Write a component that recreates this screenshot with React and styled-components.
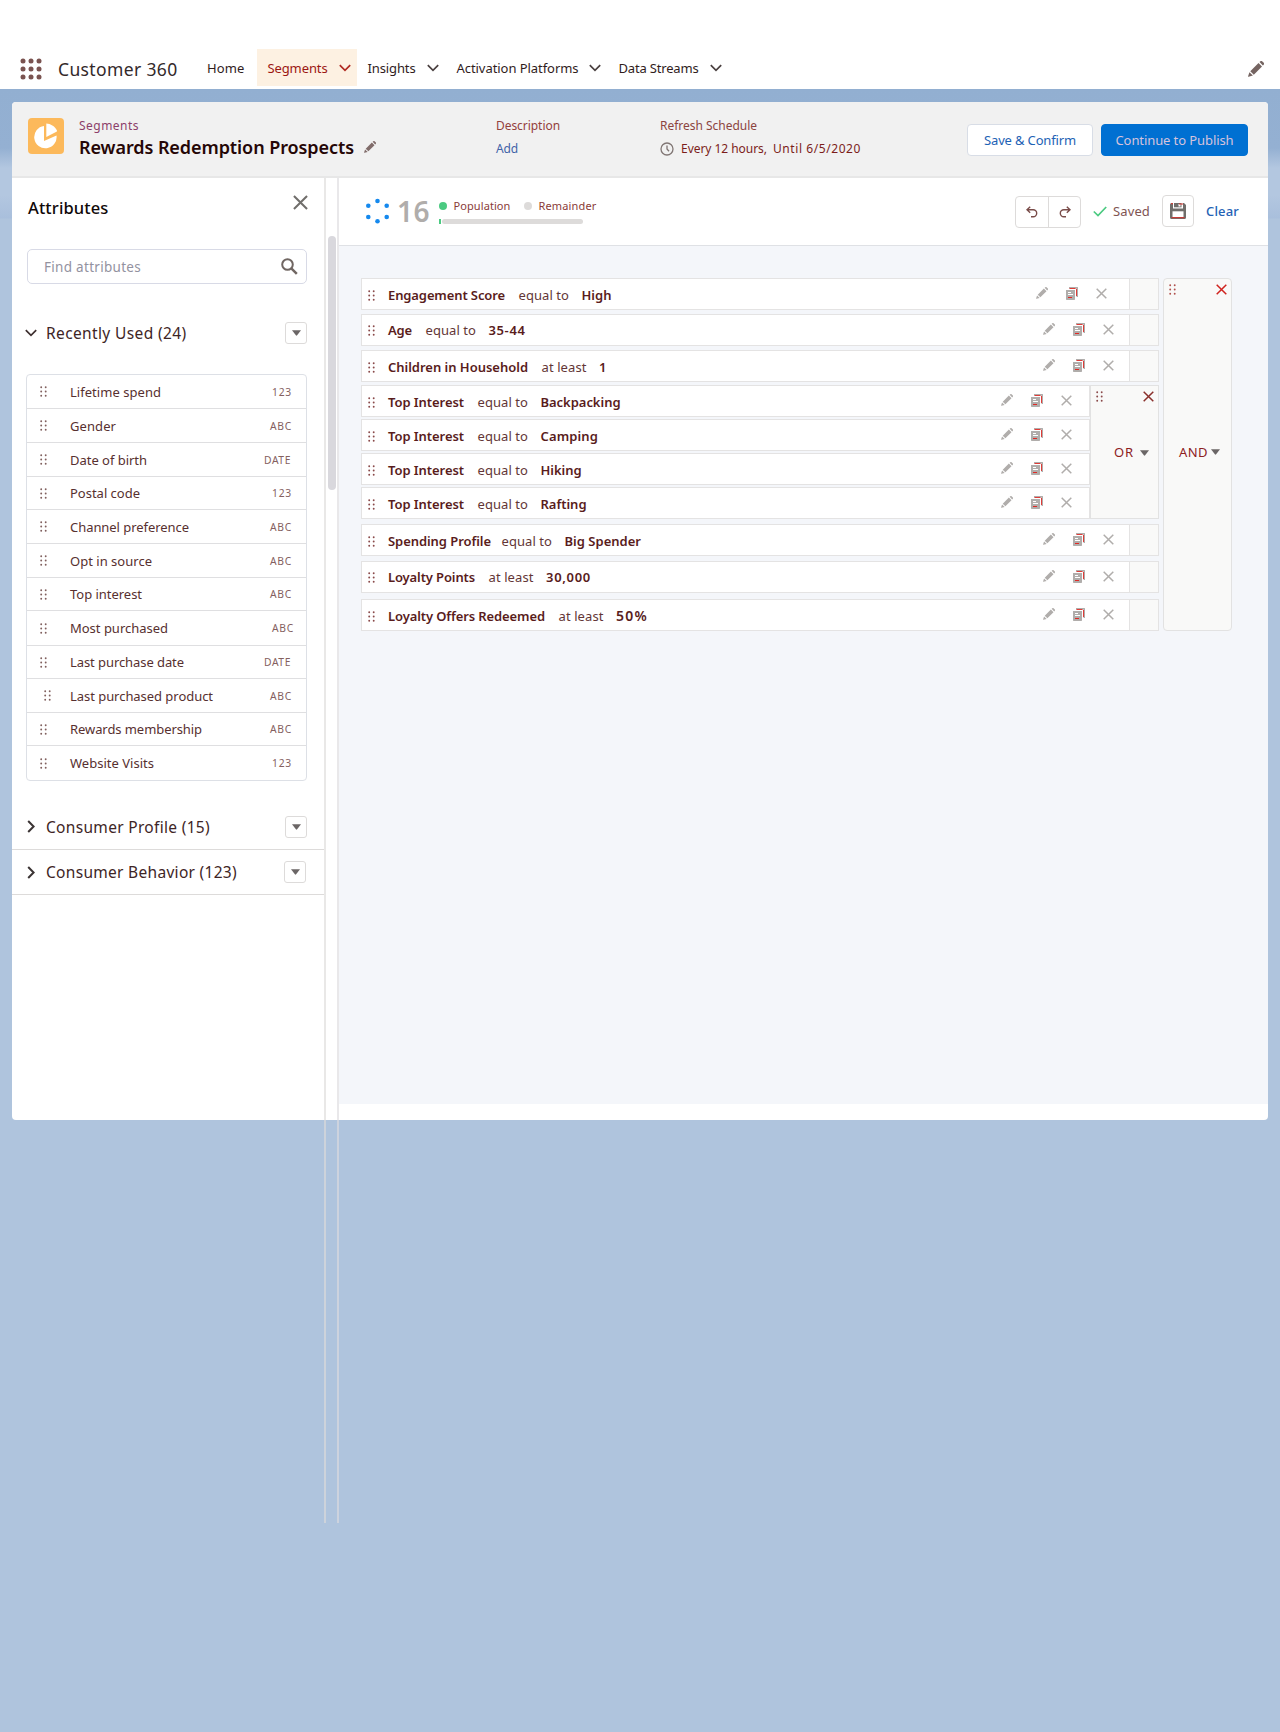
import React, { useLayoutEffect, useRef, useState } from "react";
import styled, { createGlobalStyle } from "styled-components";

const GlobalStyle = createGlobalStyle`
  * { box-sizing: border-box; }
  body { margin: 0; background: #afc4dd; font-family: "Noto Sans", "Open Sans", sans-serif; }
  svg { display: block; flex: none; }
`;

/* Text that spreads its letters over a given measure */
const Line = styled.span`
  display: block;
  flex: none;
  white-space: nowrap;
  width: ${(p) => p.$w}px;
  margin-left: ${(p) => p.$ml || 0}px;
  font-size: ${(p) => p.$size || 13}px;
  font-weight: ${(p) => p.$weight || 400};
  line-height: ${(p) => p.$lh || 18}px;
  color: ${(p) => p.$color || "#3e2a2a"};
`;

function Text({ w, ml, size, weight, lh, color, children }) {
  const ref = useRef(null);
  const [spacing, setSpacing] = useState(0);
  useLayoutEffect(() => {
    const natural = ref.current.getBoundingClientRect().width;
    setSpacing((w - natural) / Math.max(1, children.length));
  }, [w, children]);
  return (
    <Line $w={w} $ml={ml} $size={size} $weight={weight} $lh={lh} $color={color}>
      <span ref={ref} style={{ letterSpacing: spacing }}>{children}</span>
    </Line>
  );
}

/* ---------- Icons ---------- */
const Chevron = ({ color = "#444", size = 12, right }) => (
  <svg width={right ? 8 : size} height={right ? 13 : 8} viewBox={right ? "0 0 8 13" : "0 0 12 8"}>
    <path d={right ? "M1.2 1l5.4 5.5-5.4 5.5" : "M.8 1.2L6 6.4l5.200-5.200"} fill="none" stroke={color} strokeWidth={right ? 2 : 1.7} />
  </svg>
);
const Cross = ({ color = "#706e6b", size = 11, weight = 1.5 }) => (
  <svg width={size} height={size} viewBox="0 0 11 11">
    <path d="M.7.7l9.600 9.600M10.300.7L.7 10.300" stroke={color} strokeWidth={weight} />
  </svg>
);
const Pencil = ({ color = "#b0adab", size = 12 }) => (
  <svg width={size} height={size} viewBox="0 0 16 16" fill={color}>
    <path d="M1.400 11.200l3.500 3.400-4.300 1.200a.4.4 0 0 1-.5-.5zM2.300 10.200L10.500 2l3.500 3.500-8.200 8.200zM11.500 1.100l.6-.6a1.600 1.600 0 0 1 2.300 0l1.100 1.100a1.600 1.600 0 0 1 0 2.300l-.6.600z" />
  </svg>
);
const Grip = ({ color = "#8a4a4a" }) => (
  <svg width="7" height="11" viewBox="0 0 7 11" fill={color}>
    {[1.3, 5.5, 9.7].map((y) => [1.2, 5.7].map((x) => <circle key={`${x}${y}`} cx={x} cy={y} r=".95" />))}
  </svg>
);
const Copy = () => (
  <svg width="12" height="13" viewBox="0 0 12 13">
    <path d="M3 0h8.500a.5.5 0 0 1 .5.5V10h-1.500V1.500H3z" fill="#b0adab" />
    <path d="M3.500 1.500h6M10.500 2v7" fill="none" stroke="#e02a26" strokeWidth=".9" />
    <path d="M0 3h9v9.300a.7.700 0 0 1-.7.7H.7a.7.700 0 0 1-.7-.7z" fill="#b0adab" />
    <path d="M2 5.500h3M2 7.500h5" stroke="#fff" />
    <path d="M2 10.500h4" stroke="#e02a26" />
  </svg>
);
const Triangle = ({ w = 9 }) => (
  <svg width={w} height="6" viewBox="0 0 10 6"><path d="M0 0h10L5.700 5.600a1 1 0 0 1-1.400 0z" fill="#6b6666" /></svg>
);
const Waffle = () => (
  <svg width="22" height="22" viewBox="0 0 22 22" fill="#7a5350">
    {[3, 11, 19].map((y) => [3, 11, 19].map((x) => <circle key={`${x}${y}`} cx={x} cy={y} r="2.500" />))}
  </svg>
);
const Pie = () => (
  <svg width="24" height="26" viewBox="0 0 24 26" fill="#fff">
    <path d="M10 3A11.200 11.200 0 1 0 22.500 12.500L10 18z" />
    <path d="M12.300.5c4.300.2 8.300 2.700 10.500 6.700.4.800.2 1.200-.4 1.600L12.300 14z" />
  </svg>
);
const Clock = () => (
  <svg width="14" height="14" viewBox="0 0 14 14" fill="none" stroke="#807674" strokeWidth="1.300">
    <circle cx="7" cy="7" r="6" /><path d="M7 3.500V7l2 2.300" />
  </svg>
);
const Search = () => (
  <svg width="17" height="17" viewBox="0 0 17 17" fill="none" stroke="#706662">
    <circle cx="6.500" cy="6.500" r="5.300" strokeWidth="2" /><path d="M10.300 10.300l5.500 5.500" strokeWidth="2.500" />
  </svg>
);
const Spinner = () => (
  <svg width="25" height="26" viewBox="0 0 25 26" fill="#1589ee">
    {[[12.5, 3], [3.3, 7.700], [21.700, 7.700], [3.300, 19], [21.700, 19], [12.500, 23.300]].map(([x, y]) => <circle key={`${x}-${y}`} cx={x} cy={y} r="2.300" />)}
  </svg>
);
const Undo = ({ flip }) => (
  <svg width="12" height="12" viewBox="0 0 12 12" fill="none" stroke="#794c49" strokeWidth="1.400">
    <g transform={flip ? "translate(12 0) scale(-1 1)" : undefined}>
      <path d="M4.200.8L1 3.800l3.200 3M1.200 3.800h6a3.500 3.500 0 0 1 0 7H5" />
    </g>
  </svg>
);
const Check = () => (
  <svg width="14" height="11" viewBox="0 0 14 11"><path d="M.8 5.500L5 9.500 13.200 1" fill="none" stroke="#4bca81" strokeWidth="1.700" /></svg>
);
const Disk = () => (
  <svg width="16" height="16" viewBox="0 0 16 16">
    <path d="M1.500 0H3v5.500h10V0h1L16 2v12.500A1.500 1.500 0 0 1 14.500 16h-13A1.500 1.500 0 0 1 0 14.500v-13A1.500 1.500 0 0 1 1.500 0z" fill="#706e6b" />
    <path d="M4 0h7.500v4.300H4z" fill="#706e6b" /><path d="M8.500 1h2v2.500h-2z" fill="#fff" />
    <path d="M2.500 8.300h11V14h-11z" fill="#fff" /><path d="M1.500 14.700h13M1 .7h2M9 1h4" stroke="#d8302c" strokeWidth="1" />
  </svg>
);

/* ---------- Shell ---------- */
const Page = styled.div`
  width: 1280px;
  height: 1732px;
  background: linear-gradient(#92afd1 89px, #94b0d2 148px, #b3c7e0 168px, #b3c7e0 195px, #a9bfdc 218px, #afc4dd 219px);
`;
const NavBar = styled.nav`
  height: 89px;
  padding: 49px 16px 3px 19px;
  display: flex;
  align-items: stretch;
  background: #fff;
`;
const NavItem = styled.div`
  display: flex;
  align-items: center;
  padding: 1px 0 0;
  height: 37px;
  gap: ${(p) => p.$gap || 11}px;
  margin-left: ${(p) => p.$ml || 0}px;
  ${(p) => p.$active && `background: #fdf1e2; padding-left: 11px; width: 100px;`}
  svg { margin-top: -1px; }
`;
const Brand = styled.div`
  display: flex;
  align-items: center;
  gap: 16px;
  height: 37px;
  padding: 3px 0 0 1px;
`;
const NavEdit = styled.div`
  margin: 12px 0 0 auto;
`;
const Card = styled.section`
  width: 1256px;
  height: 1018px;
  margin: 13px 0 0 12px;
  border-radius: 4px;
  background: #fff;
`;
const Header = styled.header`
  height: 76px;
  display: flex;
  background: #f1f1f1;
  border-bottom: 2px solid #e7e7e7;
  border-radius: 4px 4px 0 0;
  padding: 16px 20px 0 16px;
`;
const Badge = styled.div`
  width: 36px;
  height: 36px;
  border-radius: 4px;
  background: #fcb95b;
  display: grid;
  place-items: center;
`;
const Field = styled.div`
  width: ${(p) => p.$w}px;
  margin-left: ${(p) => p.$ml || 0}px;
  padding-top: ${(p) => p.$pt || 0}px;
`;
const Inline = styled.div`
  display: flex;
  align-items: center;
  height: ${(p) => p.$h}px;
  margin-top: ${(p) => p.$mt || 0}px;
  gap: ${(p) => p.$gap || 0}px;
`;
const SavedMark = styled.div`
  display: flex;
  align-items: center;
  gap: 6px;
  padding-left: 12px;
`;
const Button = styled.button`
  height: 32px;
  width: ${(p) => p.$w}px;
  margin: 6px 0 0 8px;
  padding: 0;
  display: flex;
  align-items: center;
  justify-content: center;
  font-family: inherit;
  border-radius: 4px;
  border: 1px solid ${(p) => (p.$primary ? "#0070d2" : "#d8dde6")};
  background: ${(p) => (p.$primary ? "#0070d2" : "#fff")};
`;
const Actions = styled.div`
  display: flex;
  margin-left: auto;
`;
const Body = styled.div`
  display: flex;
  align-items: flex-start;
`;

/* ---------- Sidebar ---------- */
const Sidebar = styled.aside`
  width: 312px;
`;
const SideHead = styled.div`
  display: flex;
  justify-content: space-between;
  padding: 17px 16px 0 16px;
  height: 71px;
`;
const SearchBox = styled.div`
  display: flex;
  align-items: center;
  justify-content: space-between;
  width: 280px;
  height: 35px;
  margin-left: 15px;
  padding: 0 8px 0 16px;
  border: 1px solid #d8dae6;
  border-radius: 5px;
`;
const Group = styled.div`
  display: flex;
  align-items: center;
  height: ${(p) => p.$h}px;
  margin-top: ${(p) => p.$mt || 0}px;
  padding: 0 ${(p) => p.$pr || 17}px 0 ${(p) => p.$pl || 15}px;
  border-bottom: ${(p) => (p.$line ? "1px solid #dddbda" : "0")};
`;
const MenuButton = styled.button`
  width: 22px;
  height: 22px;
  margin-left: auto;
  padding: 0;
  display: grid;
  place-items: center;
  border: 1px solid #dddbda;
  border-radius: 3px;
  background: #fff;
`;
const AttributeList = styled.div`
  width: 281px;
  margin: 30px 0 0 14px;
  border: 1px solid #dde0e6;
  border-radius: 4px;
`;
const Attribute = styled.div`
  display: flex;
  align-items: center;
  height: ${(p) => p.$h}px;
  padding: 0 ${(p) => p.$pr}px 0 13px;
  border-bottom: 1px solid #dfdfe1;
  &:last-child { border-bottom: 0; }
  > :last-child { margin-left: auto; }
`;
const GripSlot = styled.div`
  width: 30px;
  padding-left: ${(p) => p.$indent || 0}px;
`;
const Gutter = styled.div`
  width: 15px;
  height: 1345px;
  padding: 58px 0 0 2px;
  border-left: 2px solid rgba(221, 219, 218, 0.65);
  border-right: 2px solid rgba(221, 219, 222, 0.65);
`;
const Thumb = styled.div`
  width: 8px;
  height: 254px;
  border-radius: 4px;
  background: #d9d8dd;
`;

/* ---------- Canvas ---------- */
const Main = styled.main`
  width: 929px;
`;
const Toolbar = styled.div`
  height: 68px;
  display: flex;
  padding: 17px 29px 0 26px;
  border-bottom: 1px solid #dfe1e5;
`;
const Meter = styled.div`
  margin: 3px 0 0 9px;
`;
const Legend = styled.div`
  display: flex;
  align-items: center;
  height: 16px;
`;
const Dot = styled.i`
  width: 8px;
  height: 8px;
  border-radius: 50%;
  background: ${(p) => p.$color};
  margin-left: ${(p) => p.$ml || 0}px;
`;
const Bar = styled.div`
  display: flex;
  gap: 1px;
  margin-top: 5px;
  height: 5px;
`;
const BarPart = styled.i`
  width: ${(p) => p.$w}px;
  background: ${(p) => p.$color};
  border-radius: ${(p) => p.$r || 0}px;
`;
const Tools = styled.div`
  display: flex;
  align-items: center;
  height: 32px;
  margin-left: auto;
`;
const ToolGroup = styled.div`
  display: flex;
  height: 32px;
  margin-top: 2px;
  border: 1px solid #dddbda;
  border-radius: 4px;
`;
const Tool = styled.div`
  width: 32px;
  display: grid;
  place-items: center;
  & + & { border-left: 1px solid #dddbda; }
`;
const SaveTool = styled.div`
  width: 32px;
  height: 32px;
  margin: 0 12px;
  display: grid;
  place-items: center;
  border: 1px solid #dddbda;
  border-radius: 4px;
`;
const Canvas = styled.div`
  height: 858px;
  display: flex;
  align-items: flex-start;
  gap: 4px;
  padding: 32px 0 0 22px;
  background: #f4f6fa;
`;
const Rules = styled.div`
  width: 798px;
`;
const Rule = styled.div`
  display: flex;
  height: 32px;
  margin-bottom: ${(p) => p.$mb}px;
  border: 1px solid #e4e3e3;
  background: #fff;
`;
const RuleText = styled.div`
  display: flex;
  align-items: center;
  padding: ${(p) => p.$drop}px 0 0 6px;
`;
const RuleActions = styled.div`
  display: flex;
  align-items: center;
  gap: 18px;
  margin-left: auto;
  padding: 0 ${(p) => p.$pr}px 2px 0;
`;
const RuleEnd = styled.div`
  width: 29px;
  border-left: 1px solid #e4e3e3;
  background: #f9f9f8;
`;
const Nested = styled.div`
  display: flex;
  margin-bottom: 5px;
`;
const NestedRules = styled.div`
  width: 729px;
  > :last-child { margin-bottom: 0; }
`;
const Operator = styled.div`
  width: 69px;
  height: ${(p) => p.$h}px;
  border: 1px solid #e2e2e2;
  border-radius: ${(p) => p.$r || 0}px;
  background: #f9f9f8;
`;
const OperatorTop = styled.div`
  display: flex;
  justify-content: space-between;
  padding: 5px 4px 0 5px;
`;
const OperatorLabel = styled.div`
  display: flex;
  align-items: center;
  padding-left: ${(p) => p.$pl}px;
  margin-top: ${(p) => p.$mt}px;
`;

const nav = [
  ["Segments", 60, 12, 11, true],
  ["Insights", 48, 11, 11],
  ["Activation Platforms", 122, 18, 10],
  ["Data Streams", 80, 18, 11],
];

const attributes = [
  ["Lifetime spend", 91, "123", 34], ["Gender", 46, "ABC", 34], ["Date of birth", 77, "DATE", 34],
  ["Postal code", 70, "123", 33], ["Channel preference", 119, "ABC", 34], ["Opt in source", 82, "ABC", 34],
  ["Top interest", 72, "ABC", 33], ["Most purchased", 98, "ABC", 35, 0, 13], ["Last purchase date", 114, "DATE", 33],
  ["Last purchased product", 143, "ABC", 34, 7], ["Rewards membership", 132, "ABC", 33], ["Website Visits", 84, "123", 34],
];
const typeWidth = { 123: 20, ABC: 22, DATE: 27 };

const before = [
  { name: ["Engagement Score", 117], op: ["equal to", 50.5, 13.5], val: ["High", 30], mb: 4, drop: 2, pr: 22 },
  { name: ["Age", 24], op: ["equal to", 50.5, 13.5], val: ["35-44", 37], mb: 4, drop: 0 },
  { name: ["Children in Household", 140], op: ["at least", 45, 13.5], val: ["1", 8], mb: 3, drop: 2 },
];
const interests = [["Backpacking", 80], ["Camping", 57.5], ["Hiking", 41], ["Rafting", 46]];
const after = [
  { name: ["Spending Profile", 103], op: ["equal to", 50.5, 10.5], val: ["Big Spender", 76.5], mb: 5, drop: 2 },
  { name: ["Loyalty Points", 87], op: ["at least", 45, 13.5], val: ["30,000", 45], mb: 6, drop: 0 },
  { name: ["Loyalty Offers Redeemed", 157], op: ["at least", 45, 13.5], val: ["50%", 32, 14], mb: 0, drop: 2 },
];

function RuleRow({ name, op, val, mb, drop, pr = 15, nested }) {
  return (
    <Rule $mb={mb}>
      <RuleText $drop={drop}>
        <Grip />
        <Text w={name[1]} ml={13} weight={600} color="#591c1c">{name[0]}</Text>
        <Text w={op[1]} ml={op[2]} color="#633636">{op[0]}</Text>
        <Text w={val[1]} ml={12.5} size={val[2]} weight={600} color="#591c1c">{val[0]}</Text>
      </RuleText>
      <RuleActions $pr={nested ? 17 : pr}>
        <Pencil /><Copy /><Cross color="#b0adab" />
      </RuleActions>
      {!nested && <RuleEnd />}
    </Rule>
  );
}

export default function App() {
  return (
    <Page>
      <GlobalStyle />
      <NavBar>
        <Brand>
          <Waffle />
          <Text w={119.5} size={17.5} lh={24} color="#33292a">Customer 360</Text>
        </Brand>
        <NavItem $ml={29.5}><Text w={37.5} color="#301c1c">Home</Text></NavItem>
        {nav.map(([label, w, ml, gap, active]) => (
          <NavItem key={label} $ml={ml} $gap={gap} $active={active}>
            <Text w={w} color={active ? "#9c1712" : "#301c1c"}>{label}</Text>
            <Chevron color={active ? "#b02a22" : "#4a4040"} />
          </NavItem>
        ))}
        <NavEdit><Pencil color="#756461" size={16} /></NavEdit>
      </NavBar>
      <Card>
        <Header>
          <Badge><Pie /></Badge>
          <Field $w={417} $ml={15}>
            <Text w={60} size={12} lh={16} color="#8c3f6a">Segments</Text>
            <Inline $h={24} $gap={10} $mt={1}>
              <Text w={275} size={18} weight={600} lh={24} color="#250606">Rewards Redemption Prospects</Text>
              <Pencil color="#806c6a" size={12} />
            </Inline>
          </Field>
          <Field $w={164}>
            <Text w={64} size={12} lh={16} color="#94403c">Description</Text>
            <Inline $h={24} $mt={3}><Text w={22} size={12} color="#4263a8">Add</Text></Inline>
          </Field>
          <Field $w={215}>
            <Text w={97} size={12} lh={16} color="#8c4440">Refresh Schedule</Text>
            <Inline $h={24} $mt={3}>
              <Clock />
              <Text w={86} ml={7} size={12} color="#7c1d1a">Every 12 hours,</Text>
              <Text w={88} ml={6} size={12} color="#7c1d1a">Until 6/5/2020</Text>
            </Inline>
          </Field>
          <Actions>
            <Button $w={126}><Text w={92} color="#1d62b5">Save &amp; Confirm</Text></Button>
            <Button $w={147} $primary><Text w={118} color="#d6c3dc">Continue to Publish</Text></Button>
          </Actions>
        </Header>
        <Body>
          <Sidebar>
            <SideHead>
              <Text w={80.5} size={16.5} weight={500} lh={25} color="#100808">Attributes</Text>
              <Cross size={15} />
            </SideHead>
            <SearchBox>
              <Text w={97} size={13.5} color="#93929f">Find attributes</Text>
              <Search />
            </SearchBox>
            <Group $h={22} $mt={38} $pl={13}>
              <Chevron color="#3e3030" />
              <Text w={140.5} ml={9} size={15.5} lh={22} color="#3e2525">Recently Used (24)</Text>
              <MenuButton><Triangle /></MenuButton>
            </Group>
            <AttributeList>
              {attributes.map(([label, w, type, h, indent, pr]) => (
                <Attribute key={label} $h={h} $pr={pr ? 12 : type === "DATE" ? 15 : 14}>
                  <GripSlot $indent={indent ? 4 : 0}><Grip color="#80605e" /></GripSlot>
                  <Text w={w} color="#573030">{label}</Text>
                  <Text w={typeWidth[type]} size={10.3} color="#84605e">{type}</Text>
                </Attribute>
              ))}
            </AttributeList>
            <Group $h={46} $mt={23} $line>
              <Chevron right color="#3b3434" />
              <Text w={164} ml={11} size={15.5} lh={22} color="#3e2525">Consumer Profile (15)</Text>
              <MenuButton><Triangle /></MenuButton>
            </Group>
            <Group $h={45} $pr={18} $line>
              <Chevron right color="#3b3434" />
              <Text w={191} ml={11} size={15.5} lh={22} color="#3e2525">Consumer Behavior (123)</Text>
              <MenuButton><Triangle /></MenuButton>
            </Group>
          </Sidebar>
          <Gutter><Thumb /></Gutter>
          <Main>
            <Toolbar>
              <Inline $h={32}>
                <Spinner />
                <Text w={33} ml={7} size={28} weight={600} lh={30} color="#b0adab">16</Text>
              </Inline>
              <Meter>
                <Legend>
                  <Dot $color="#4bca81" />
                  <Text w={57} ml={6.5} size={11} lh={16} color="#8a3b38">Population</Text>
                  <Dot $color="#dddbda" $ml={13.5} />
                  <Text w={58} ml={6.5} size={11} lh={16} color="#8a3b38">Remainder</Text>
                </Legend>
                <Bar>
                  <BarPart $w={2} $color="#4bca81" />
                  <BarPart $w={141} $color="#dddbda" $r={2.5} />
                </Bar>
              </Meter>
              <Tools>
                <ToolGroup><Tool><Undo /></Tool><Tool><Undo flip /></Tool></ToolGroup>
                <SavedMark>
                  <Check />
                  <Text w={37} color="#805452">Saved</Text>
                </SavedMark>
                <SaveTool><Disk /></SaveTool>
                <Text w={33} color="#2462b5" weight={500} lh={20}>Clear</Text>
              </Tools>
            </Toolbar>
            <Canvas>
              <Rules>
                {before.map((r) => <RuleRow key={r.name[0]} {...r} />)}
                <Nested>
                  <NestedRules>
                    {interests.map((val) => (
                      <RuleRow key={val[0]} nested name={["Top Interest", 76]} op={["equal to", 50.5, 13.5]} val={val} mb={2} drop={2} />
                    ))}
                  </NestedRules>
                  <Operator $h={134}>
                    <OperatorTop><Grip color="#8a4a4a" /><Cross color="#8a302c" /></OperatorTop>
                    <OperatorLabel $pl={22} $mt={41}>
                      <Text w={20} ml={1} size={13} color="#8d211e">OR</Text>
                      <Field $w={14} $ml={6} $pt={1}><Triangle /></Field>
                    </OperatorLabel>
                  </Operator>
                </Nested>
                {after.map((r) => <RuleRow key={r.name[0]} {...r} />)}
              </Rules>
              <Operator $h={353} $r={4}>
                <OperatorTop><Grip color="#b0504c" /><Cross color="#d0231e" /></OperatorTop>
                <OperatorLabel $pl={15} $mt={148}>
                  <Text w={29} size={13} color="#8d211e">AND</Text>
                  <Field $w={14} $ml={3}><Triangle /></Field>
                </OperatorLabel>
              </Operator>
            </Canvas>
          </Main>
        </Body>
      </Card>
    </Page>
  );
}
